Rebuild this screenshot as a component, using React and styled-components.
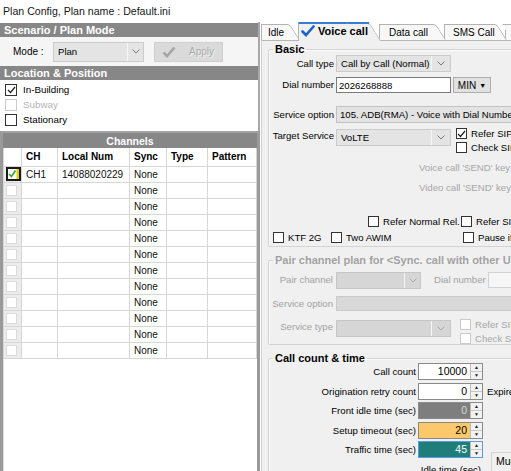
import React from 'react';
import styled, { createGlobalStyle } from 'styled-components';

const GlobalStyle = createGlobalStyle`
  html, body { margin: 0; padding: 0; background: #fff; overflow: hidden; }
  body { font-family: "Liberation Sans", Arial, sans-serif; font-size: 9.6px; color: #000; }
  * { box-sizing: border-box; }
`;

const Window = styled.div`
  width: 511px;
  height: 471px;
  display: flex;
  flex-direction: column;
  overflow: hidden;
  background: #fff;
`;

const TitleBar = styled.div`
  height: 22px;
  flex: none;
  padding: 0 3px;
  display: flex;
  align-items: center;
  font-size: 10.6px;
  color: #161616;
`;

const Body = styled.div`
  flex: 1;
  display: flex;
  min-height: 0;
`;

/* ---------- left side ---------- */

const LeftPanel = styled.div`
  width: 260px;
  flex: none;
  display: flex;
  flex-direction: column;
  background: #fff;
`;

const TopSection = styled.div`
  padding-top: 1px;
  border-right: 2px solid #a8a8a8;
`;

const SectionHeader = styled.div`
  height: ${(p) => p.$h || 14}px;
  display: flex;
  align-items: center;
  justify-content: ${(p) => (p.$center ? 'center' : 'flex-start')};
  padding-left: ${(p) => (p.$center ? 0 : 4)}px;
  background: #878787;
  color: #fff;
  font-weight: bold;
  font-size: ${(p) => (p.$center ? 10.5 : 11)}px;
  white-space: nowrap;
`;

const ModeRow = styled.div`
  height: 29px;
  display: flex;
  align-items: center;
  padding-left: 13px;
  background: #f5f5f5;
  font-size: 10px;
`;

const ModeLabel = styled.span`
  width: 40px;
`;

const Combo = styled.div`
  width: ${(p) => p.$w}px;
  height: ${(p) => p.$h || 17}px;
  flex: none;
  display: flex;
  align-items: center;
  margin-top: ${(p) => p.$mt || 0}px;
  background: ${(p) => (p.$disabled ? '#d6d6d6' : '#e4e4e4')};
  border: 1px solid ${(p) => (p.$disabled ? '#c6c6c6' : '#cbcbcb')};
  color: ${(p) => (p.$disabled ? '#9a9a9a' : '#000')};
  font-size: ${(p) => p.$fs || 9.6}px;
  overflow: hidden;
  white-space: nowrap;
`;

const ComboText = styled.span`
  flex: 1;
  padding-left: 4px;
`;

const ComboArrow = styled.span`
  width: ${(p) => p.$w || 18}px;
  height: 100%;
  flex: none;
  display: flex;
  align-items: center;
  justify-content: center;
  border-left: 1px solid #f6f6f6;
`;

const ApplyButton = styled.div`
  width: 69px;
  height: 20px;
  margin-left: 10px;
  display: flex;
  align-items: center;
  gap: 13px;
  padding-left: 7px;
  background: #dadada;
  border: 1px solid #cecece;
  color: #aaaaaa;
  text-shadow: 1px 1px 0 #f2f2f2;
  font-size: 10px;
`;

const CheckList = styled.div`
  height: 51px;
  padding: 2px 0 0 5px;
`;

const CheckLine = styled.div`
  height: 15px;
  display: flex;
  align-items: center;
  gap: 6px;
  font-size: 9.8px;
  color: ${(p) => (p.$disabled ? '#b4b4b4' : '#000')};
`;

const ChannelsBox = styled.div`
  flex: 1;
  display: flex;
  flex-direction: column;
  border-top: 2px solid #a2a2a2;
  border-left: 3px solid #9a9a9a;
  border-right: 3px solid #9a9a9a;
  box-shadow: inset 1px 0 0 #dcdcdc;
`;

const Table = styled.table`
  width: 100%;
  border-collapse: collapse;
  table-layout: fixed;
  font-size: 10px;
`;

const HeadCell = styled.th`
  height: 18px;
  padding: 0 0 0 4px;
  text-align: left;
  font-weight: bold;
  border: 1px solid #d6d6d6;
  border-top: none;
  white-space: nowrap;
  overflow: hidden;
`;

const Cell = styled.td`
  height: 16px;
  padding: 0 0 0 4px;
  border: 1px solid #d6d6d6;
  white-space: nowrap;
  overflow: hidden;
  color: #111;
`;

const BoxCell = styled.td`
  height: 16px;
  padding: 0 0 0 2px;
  border: 1px solid #d6d6d6;
  background: #ececec;
  vertical-align: middle;
`;

const RowBox = styled.span`
  display: block;
  width: 11px;
  height: 11px;
  background: #fff;
  border: 1px solid #dadada;
`;

/* ---------- right side ---------- */

const RightPanel = styled.div`
  flex: 1;
  min-width: 0;
  display: flex;
  flex-direction: column;
  overflow: hidden;
  background: #fff;
`;

const TabStrip = styled.div`
  height: 18px;
  flex: none;
  display: flex;
  align-items: flex-end;
  padding-left: 1px;
`;

const Tab = styled.div`
  position: relative;
  z-index: ${(p) => p.$z};
  width: ${(p) => p.$w}px;
  flex: none;
  height: ${(p) => (p.$active ? 19 : 16)}px;
  margin-right: -2px;
  margin-bottom: ${(p) => (p.$active ? -1 : 0)}px;
  padding-left: ${(p) => p.$pl}px;
  padding-bottom: ${(p) => (p.$active ? 1 : 0)}px;
  display: flex;
  align-items: center;
  gap: 3px;
  font-size: ${(p) => (p.$active ? 11 : 10)}px;
  font-weight: ${(p) => (p.$active ? 'bold' : 'normal')};
  white-space: nowrap;

  &::before,
  &::after {
    content: '';
    position: absolute;
    top: 0;
    bottom: 0;
    z-index: -1;
    background: ${(p) => (p.$active ? '#f0f0f0' : '#f8f8f8')};
    border-top: ${(p) => (p.$active ? '2px solid #3a7bd5' : '1px solid #b2b2b2')};
  }
  &::before {
    left: 0;
    right: 12px;
    border-left: 1px solid #b2b2b2;
  }
  &::after {
    right: 0;
    width: 22px;
    border-right: 1px solid #b2b2b2;
    border-top-right-radius: 3px;
    transform: skewX(32deg);
    transform-origin: bottom left;
  }
`;

const TabPage = styled.div`
  flex: 1;
  align-self: flex-start;
  width: 340px;
  margin-left: 1px;
  background: #f0f0f0;
  border-top: 1px solid #b6b6b6;
  border-left: 1px solid #d0d0d0;
  padding-top: 0;
`;

const Group = styled.fieldset`
  width: 330px;
  min-width: 0;
  margin: ${(p) => p.$mt}px 0 0 6px;
  padding: 0 0 ${(p) => p.$pb}px 1px;
  border: 1px solid #d3d3d3;
  border-radius: 2px;
  box-shadow: inset 1px 1px 0 #fbfbfb;
`;

const Legend = styled.legend`
  margin-left: 3px;
  padding: 0 2px;
  font-size: 11px;
  line-height: 13px;
  font-weight: bold;
  color: ${(p) => (p.$disabled ? '#a2a2a2' : '#000')};
  white-space: nowrap;
`;

const Row = styled.div`
  display: flex;
  align-items: ${(p) => (p.$top ? 'flex-start' : 'center')};
  height: ${(p) => p.$h}px;
  margin-top: ${(p) => p.$mt || 0}px;
  padding-left: ${(p) => p.$pl || 0}px;
  white-space: nowrap;
`;

const Label = styled.span`
  width: ${(p) => (p.$w ? `${p.$w}px` : 'auto')};
  flex: none;
  margin-top: ${(p) => p.$mt || 0}px;
  margin-left: ${(p) => p.$ml || 0}px;
  margin-right: ${(p) => (p.$gap === undefined ? 2 : p.$gap)}px;
  line-height: 16px;
  text-align: right;
  color: ${(p) => (p.$disabled ? '#a2a2a2' : '#000')};
  white-space: nowrap;
`;

const Hint = styled.span`
  color: #a6a6a6;
`;

const TextBox = styled.div`
  width: ${(p) => p.$w}px;
  height: ${(p) => p.$h || 16}px;
  flex: none;
  display: flex;
  align-items: center;
  padding-left: 2px;
  background: ${(p) => (p.$disabled ? '#f6f6f6' : '#fff')};
  border: 1px solid ${(p) => (p.$disabled ? '#d2d2d2' : '#7a7a7a')};
`;

const Field = styled.div`
  width: ${(p) => p.$w}px;
  height: ${(p) => p.$h || 17}px;
  flex: none;
  display: flex;
  align-items: center;
  padding-left: 3px;
  background: ${(p) => (p.$disabled ? '#d8d8d8' : '#e3e3e3')};
  border: 1px solid ${(p) => (p.$disabled ? '#cacaca' : '#c2c2c2')};
  overflow: hidden;
  white-space: nowrap;
`;

const SmallButton = styled.div`
  width: 38px;
  height: 16px;
  margin-left: 2px;
  display: flex;
  align-items: center;
  justify-content: center;
  gap: 3px;
  background: #e1e1e1;
  border: 1px solid #adadad;
  font-size: 10px;
`;

const Tri = styled.span`
  font-size: 7px;
`;

const CheckStack = styled.div`
  display: flex;
  flex-direction: column;
  gap: 1px;
  margin-left: ${(p) => p.$ml}px;
`;

const CheckItem = styled.span`
  display: inline-flex;
  align-items: center;
  gap: 4px;
  flex: none;
  width: ${(p) => (p.$w ? `${p.$w}px` : 'auto')};
  height: 13px;
  color: ${(p) => (p.$disabled ? '#a6a6a6' : '#000')};
  white-space: nowrap;
`;

const Box = styled.span`
  width: ${(p) => p.$size || 11}px;
  height: ${(p) => p.$size || 11}px;
  flex: none;
  display: inline-flex;
  align-items: center;
  justify-content: center;
  background: #fff;
  border: 1px solid ${(p) => (p.$disabled ? '#cacaca' : '#333')};
`;

const CountGrid = styled.div`
  display: grid;
  grid-template-columns: 148px 65px 1fr;
  grid-auto-rows: 17px;
  row-gap: 2.6px;
  margin-top: -2px;
  padding-bottom: 6px;
`;

const CountLabel = styled.span`
  margin-right: 2px;
  line-height: 17px;
  text-align: right;
  white-space: nowrap;
`;

const SpinBox = styled.div`
  display: flex;
  height: 17px;
  background: ${(p) => p.$bg};
  color: ${(p) => p.$fg};
  border: 1px solid ${(p) => (p.$focus ? '#5d9be0' : '#8a8a8a')};
  font-size: 10.5px;
`;

const SpinValue = styled.span`
  flex: 1;
  text-align: right;
  padding-right: 3px;
  line-height: 15px;
`;

const Spinner = styled.span`
  width: 12px;
  display: flex;
  flex-direction: column;
  background: #f2f2f2;
  border-left: 1px solid #bdbdbd;
  color: #222;
`;

const SpinHalf = styled.span`
  flex: 1;
  display: flex;
  align-items: center;
  justify-content: center;
  font-size: 5px;
  line-height: 1;
  border-bottom: ${(p) => (p.$top ? '1px solid #c8c8c8' : 'none')};
`;

const Extra = styled.span`
  margin-left: 4px;
  line-height: 17px;
  white-space: nowrap;
`;

const MultiBox = styled.div`
  grid-row: 5 / span 2;
  grid-column: 3;
  margin: 11px 0 0 8px;
  padding: 2px 0 0 4px;
  border-left: 1px solid #d3d3d3;
  border-top: 1px solid #d3d3d3;
  white-space: nowrap;
  font-size: 10.5px;
`;

/* ---------- small drawings ---------- */

const Chevron = ({ disabled }) => (
  <svg width="8" height="5" viewBox="0 0 8 5">
    <polyline points="0.5,0.5 4,4 7.5,0.5" fill="none" stroke={disabled ? '#a8a8a8' : '#7a7a7a'} strokeWidth="1" />
  </svg>
);

const Tick = () => (
  <svg width="9" height="8" viewBox="0 0 9 8">
    <polyline points="1,4 3.5,6.5 8,1" fill="none" stroke="#222" strokeWidth="1.2" />
  </svg>
);

const BlueCheck = () => (
  <svg width="14" height="12" viewBox="0 0 14 12">
    <path d="M1.5 6.5 L5 10 L12.5 1.5" fill="none" stroke="#1d62c8" strokeWidth="2.6" strokeLinecap="round" />
  </svg>
);

const GreyCheck = () => (
  <svg width="14" height="12" viewBox="0 0 14 12">
    <path d="M1.5 6.5 L5 10 L12.5 1.5" fill="none" stroke="#a6a6a6" strokeWidth="2.6" />
  </svg>
);

const RowChecked = () => (
  <svg width="15" height="14" viewBox="0 0 15 14" style={{ display: 'block' }}>
    <rect x="1" y="1" width="13" height="12" fill="#fff" stroke="#1a1a1a" strokeWidth="2" />
    <rect x="10.5" y="2" width="2.5" height="10" fill="#e3d000" />
    <path d="M3 7 L5.5 9.5 L9.5 3.5" fill="none" stroke="#3aa33a" strokeWidth="1.6" />
  </svg>
);

const Check = ({ checked, disabled, children, w }) => (
  <CheckItem $disabled={disabled} $w={w}>
    <Box $disabled={disabled}>{checked && <Tick />}</Box>
    {children}
  </CheckItem>
);

const Select = ({ w, h, mt, disabled, arrow, children }) => (
  <Combo $w={w} $h={h} $mt={mt} $disabled={disabled}>
    <ComboText>{children}</ComboText>
    <ComboArrow $w={arrow}>
      <Chevron disabled={disabled} />
    </ComboArrow>
  </Combo>
);

const Spin = ({ value, bg = '#fff', fg = '#000', focus }) => (
  <SpinBox $bg={bg} $fg={fg} $focus={focus}>
    <SpinValue>{value}</SpinValue>
    <Spinner>
      <SpinHalf $top>▲</SpinHalf>
      <SpinHalf>▼</SpinHalf>
    </Spinner>
  </SpinBox>
);

/* ---------- data ---------- */

const tabs = [
  { label: 'Idle', w: 39, pl: 7, z: 6 },
  { label: 'Voice call', w: 83, pl: 3, z: 10, active: true },
  { label: 'Data call', w: 67, pl: 10, z: 4 },
  { label: 'SMS Call', w: 63, pl: 9, z: 3 },
  { label: '', w: 30, pl: 8, z: 2 },
];

const channels = [
  { on: true, ch: 'CH1', num: '14088020229' },
  ...Array.from({ length: 11 }, () => ({ on: false, ch: '', num: '' })),
];

const counts = [
  { label: 'Call count', value: '10000' },
  { label: 'Origination retry count', value: '0', extra: 'Expire time' },
  { label: 'Front idle time (sec)', value: '0', bg: '#7e7e7e', fg: '#d8d8d8' },
  { label: 'Setup timeout (sec)', value: '20', bg: '#fbc96b' },
  { label: 'Traffic time (sec)', value: '45', bg: '#1f7e7a', fg: '#fff', focus: true },
  { label: 'Idle time (sec)', value: '10', bg: '#7e7e7e', fg: '#d8d8d8' },
];

export default function App() {
  return (
    <Window>
      <GlobalStyle />
      <TitleBar>Plan Config, Plan name : Default.ini</TitleBar>
      <Body>
        <LeftPanel>
          <TopSection>
            <SectionHeader>Scenario / Plan Mode</SectionHeader>
            <ModeRow>
              <ModeLabel>Mode :</ModeLabel>
              <Select w={91} h={20} arrow={16}>Plan</Select>
              <ApplyButton>
                <GreyCheck />
                Apply
              </ApplyButton>
            </ModeRow>
            <SectionHeader>Location &amp; Position</SectionHeader>
            <CheckList>
              <CheckLine>
                <Box $size={12}><Tick /></Box>
                In-Building
              </CheckLine>
              <CheckLine $disabled>
                <Box $size={12} $disabled />
                Subway
              </CheckLine>
              <CheckLine>
                <Box $size={12} />
                Stationary
              </CheckLine>
            </CheckList>
          </TopSection>
          <ChannelsBox>
            <SectionHeader $center $h={15}>Channels</SectionHeader>
            <Table>
              <colgroup>
                <col style={{ width: 18 }} />
                <col style={{ width: 36 }} />
                <col style={{ width: 72 }} />
                <col style={{ width: 37 }} />
                <col style={{ width: 41 }} />
                <col />
              </colgroup>
              <thead>
                <tr>
                  <HeadCell />
                  <HeadCell>CH</HeadCell>
                  <HeadCell>Local Num</HeadCell>
                  <HeadCell>Sync</HeadCell>
                  <HeadCell>Type</HeadCell>
                  <HeadCell>Pattern</HeadCell>
                </tr>
              </thead>
              <tbody>
                {channels.map((c, i) => (
                  <tr key={i}>
                    <BoxCell>{c.on ? <RowChecked /> : <RowBox />}</BoxCell>
                    <Cell>{c.ch}</Cell>
                    <Cell>{c.num}</Cell>
                    <Cell>None</Cell>
                    <Cell />
                    <Cell />
                  </tr>
                ))}
              </tbody>
            </Table>
          </ChannelsBox>
        </LeftPanel>

        <RightPanel>
          <TabStrip>
            {tabs.map((t, i) => (
              <Tab key={i} $w={t.w} $pl={t.pl} $z={t.z} $active={t.active}>
                {t.active && <BlueCheck />}
                {t.label}
              </Tab>
            ))}
          </TabStrip>
          <TabPage>
            <Group $mt={2} $pb={2}>
              <Legend>Basic</Legend>
              <Row $h={17} $mt={-1}>
                <Label $w={64}>Call type</Label>
                <Select w={115} arrow={19}>Call by Call (Normal)</Select>
              </Row>
              <Row $h={16} $mt={5}>
                <Label $w={64}>Dial number</Label>
                <TextBox $w={115}>2026268888</TextBox>
                <SmallButton>
                  MIN <Tri>▼</Tri>
                </SmallButton>
              </Row>
              <Row $h={17} $mt={13}>
                <Label $w={64}>Service option</Label>
                <Field $w={230}>105. ADB(RMA) - Voice with Dial Number</Field>
              </Row>
              <Row $h={27} $mt={4} $top>
                <Label $w={64} $mt={1}>Target Service</Label>
                <Select w={115} mt={2} arrow={19}>VoLTE</Select>
                <CheckStack $ml={5}>
                  <Check checked>Refer SIP</Check>
                  <Check>Check SIP</Check>
                </CheckStack>
              </Row>
              <Row $h={14} $mt={6} $pl={149}>
                <Hint>Voice call 'SEND' key</Hint>
              </Row>
              <Row $h={14} $mt={6} $pl={149}>
                <Hint>Video call 'SEND' key</Hint>
              </Row>
              <Row $h={14} $mt={20} $pl={98}>
                <Check w={93}>Refer Normal Rel.</Check>
                <Check>Refer SIP Rel.</Check>
              </Row>
              <Row $h={14} $mt={2} $pl={3}>
                <Check w={58}>KTF 2G</Check>
                <Check w={132}>Two AWIM</Check>
                <Check>Pause if fail</Check>
              </Row>
            </Group>

            <Group $mt={7} $pb={2}>
              <Legend $disabled>Pair channel plan for &lt;Sync. call with other UE&gt;</Legend>
              <Row $h={16} $mt={5}>
                <Label $w={63} $gap={3} $disabled>Pair channel</Label>
                <Select w={85} disabled arrow={16} />
                <Label $ml={13} $disabled>Dial number</Label>
                <TextBox $w={60} $disabled />
              </Row>
              <Row $h={15} $mt={8}>
                <Label $w={63} $gap={3} $disabled>Service option</Label>
                <Field $w={230} $h={15} $disabled />
              </Row>
              <Row $h={24} $mt={7} $top>
                <Label $w={63} $gap={3} $mt={1} $disabled>Service type</Label>
                <Select w={115} mt={2} disabled arrow={19} />
                <CheckStack $ml={9}>
                  <Check disabled>Refer SIP</Check>
                  <Check disabled>Check SIP</Check>
                </CheckStack>
              </Row>
            </Group>

            <Group $mt={7} $pb={0}>
              <Legend>Call count &amp; time</Legend>
              <CountGrid>
                {counts.map((c) => (
                  <React.Fragment key={c.label}>
                    <CountLabel>{c.label}</CountLabel>
                    <Spin value={c.value} bg={c.bg} fg={c.fg} focus={c.focus} />
                    {c.extra ? <Extra>{c.extra}</Extra> : <span />}
                  </React.Fragment>
                ))}
                <MultiBox>Multi call</MultiBox>
              </CountGrid>
            </Group>
          </TabPage>
        </RightPanel>
      </Body>
    </Window>
  );
}
